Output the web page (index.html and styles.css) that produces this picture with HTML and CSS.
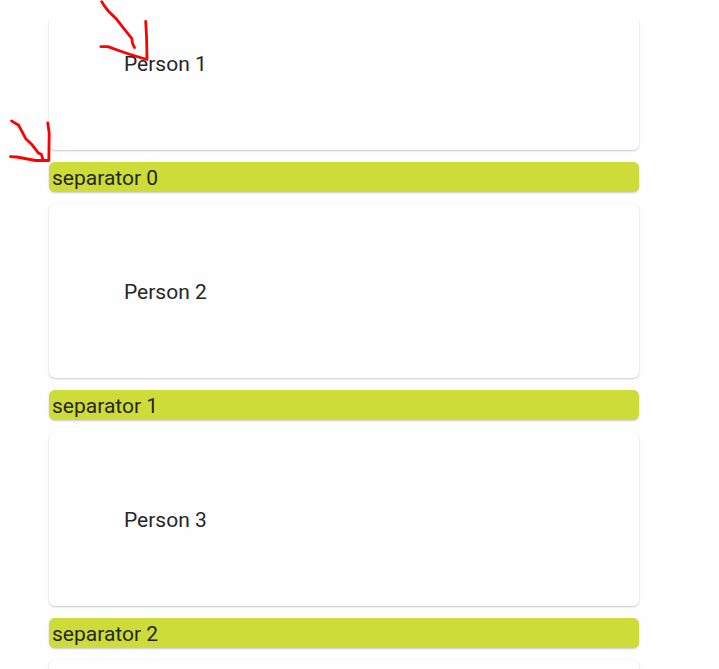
FILE: index.html
```html
<!DOCTYPE html>
<html lang="en">
<head>
<meta charset="utf-8">
<title>People</title>
<link rel="stylesheet" href="styles.css">
</head>
<body>
<main class="list">
  <div class="card person">Person 1</div>
  <div class="card separator">separator 0</div>
  <div class="card person">Person 2</div>
  <div class="card separator">separator 1</div>
  <div class="card person">Person 3</div>
  <div class="card separator">separator 2</div>
  <div class="card person"></div>
</main>
<svg class="marks" width="160" height="170" viewBox="0 0 160 170">
  <path d="M101.7 1.7Q104 6 108.3 11L116.7 19.3L125 30L131.7 38.3Q132 44 134.5 47.5M100.8 46.6H108L120 51Q134 56 147 59.5Q147 40 145.7 21.5"/>
  <path d="M11.5 120.9L18.7 125.3L25.7 138.7L31.7 144.3L38.3 152.9L41.3 154.3L43 159.7M10.5 156.6L16.7 157L35.7 160.5H48.8L49.2 133L47.7 122.8"/>
</svg>
</body>
</html>
```
FILE: styles.css
```css
* { box-sizing: border-box; }
html, body { height: 100%; }
body {
  margin: 0;
  padding-top: 21px;
  overflow: hidden;
  background: #fefefe;
  color: #272727;
  font: 400 21px/30px Roboto, sans-serif;
}
.list {
  display: flex;
  flex-direction: column;
  gap: 12px;
  height: 648px;
  padding: 0 80px 0 49px;
  overflow: hidden;
}
.card {
  flex: none;
  border-radius: 6px;
  box-shadow: 0 1px 2px rgba(0, 0, 0, 0.2), 0 0 1px rgba(0, 0, 0, 0.08);
}
.person {
  height: 174px;
  padding: 73px 75px;
  background: #fefefe;
}
.person:first-child { margin-top: -45px; }
.separator {
  height: 30px;
  padding: 1px 3px;
  background: #cddc39;
}
.marks {
  position: absolute;
  top: 0;
  left: 0;
  fill: none;
  stroke: #ff0000;
  stroke-width: 2.8;
  stroke-linecap: round;
  stroke-linejoin: round;
}
```
